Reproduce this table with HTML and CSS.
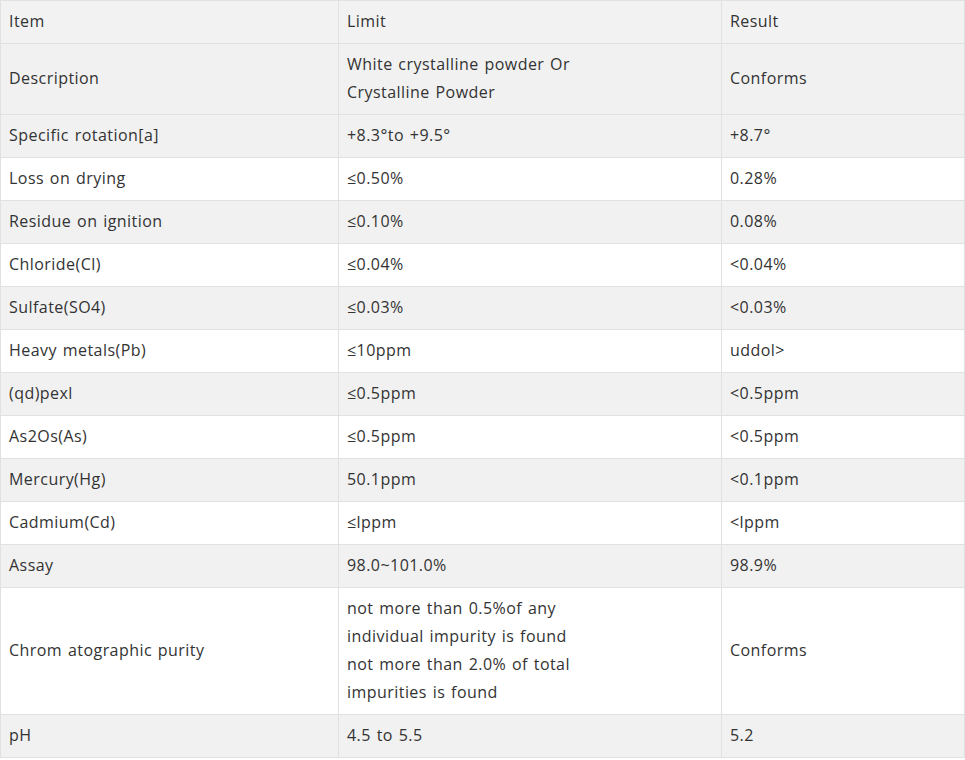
FILE: index.html
```html
<!DOCTYPE html>
<html>
<head>
<meta charset="utf-8">
<link rel="stylesheet" href="styles.css">
</head>
<body>
<table class="spec">
<colgroup><col class="c1"><col class="c2"><col class="c3"></colgroup>
<tr class="head"><td>Item</td><td>Limit</td><td>Result</td></tr>
<tr class="odd"><td>Description</td><td>White crystalline powder Or<br>Crystalline Powder</td><td>Conforms</td></tr>
<tr class="odd"><td>Specific rotation[a]</td><td>+8.3°to +9.5°</td><td>+8.7°</td></tr>
<tr><td>Loss on drying</td><td>≤0.50%</td><td>0.28%</td></tr>
<tr class="odd"><td>Residue on ignition</td><td>≤0.10%</td><td>0.08%</td></tr>
<tr><td>Chloride(Cl)</td><td>≤0.04%</td><td>&lt;0.04%</td></tr>
<tr class="odd"><td>Sulfate(SO4)</td><td>≤0.03%</td><td>&lt;0.03%</td></tr>
<tr><td>Heavy metals(Pb)</td><td>≤10ppm</td><td>uddol&gt;</td></tr>
<tr class="odd"><td>(qd)pexl</td><td>≤0.5ppm</td><td>&lt;0.5ppm</td></tr>
<tr><td>As2Os(As)</td><td>≤0.5ppm</td><td>&lt;0.5ppm</td></tr>
<tr class="odd"><td>Mercury(Hg)</td><td>50.1ppm</td><td>&lt;0.1ppm</td></tr>
<tr><td>Cadmium(Cd)</td><td>≤lppm</td><td>&lt;lppm</td></tr>
<tr class="odd"><td>Assay</td><td>98.0~101.0%</td><td>98.9%</td></tr>
<tr><td>Chrom atographic purity</td><td>not more than 0.5%of any<br>individual impurity is found<br>not more than 2.0% of total<br>impurities is found</td><td>Conforms</td></tr>
<tr class="odd"><td>pH</td><td>4.5 to 5.5</td><td>5.2</td></tr>
</table>
</body>
</html>
```
FILE: styles.css
```css
html, body {
  margin: 0;
  padding: 0;
  background: #ffffff;
}
.spec {
  border-collapse: collapse;
  width: 964px;
  table-layout: fixed;
  font-family: "Open Sans", sans-serif;
  font-size: 16px;
  letter-spacing: 0.45px;
  word-spacing: 1.2px;
  color: #333333;
}
.c1 { width: 338px; }
.c2 { width: 383px; }
.c3 { width: 243px; }
.spec td {
  border: 1px solid #dfe1e4;
  padding: 6px 7px 8px 8px;
  line-height: 28px;
  vertical-align: middle;
  text-align: left;
  white-space: nowrap;
}
.spec tr.head td { background: #f2f2f2; }
.spec tr.odd td { background: #f1f1f1; }
```
